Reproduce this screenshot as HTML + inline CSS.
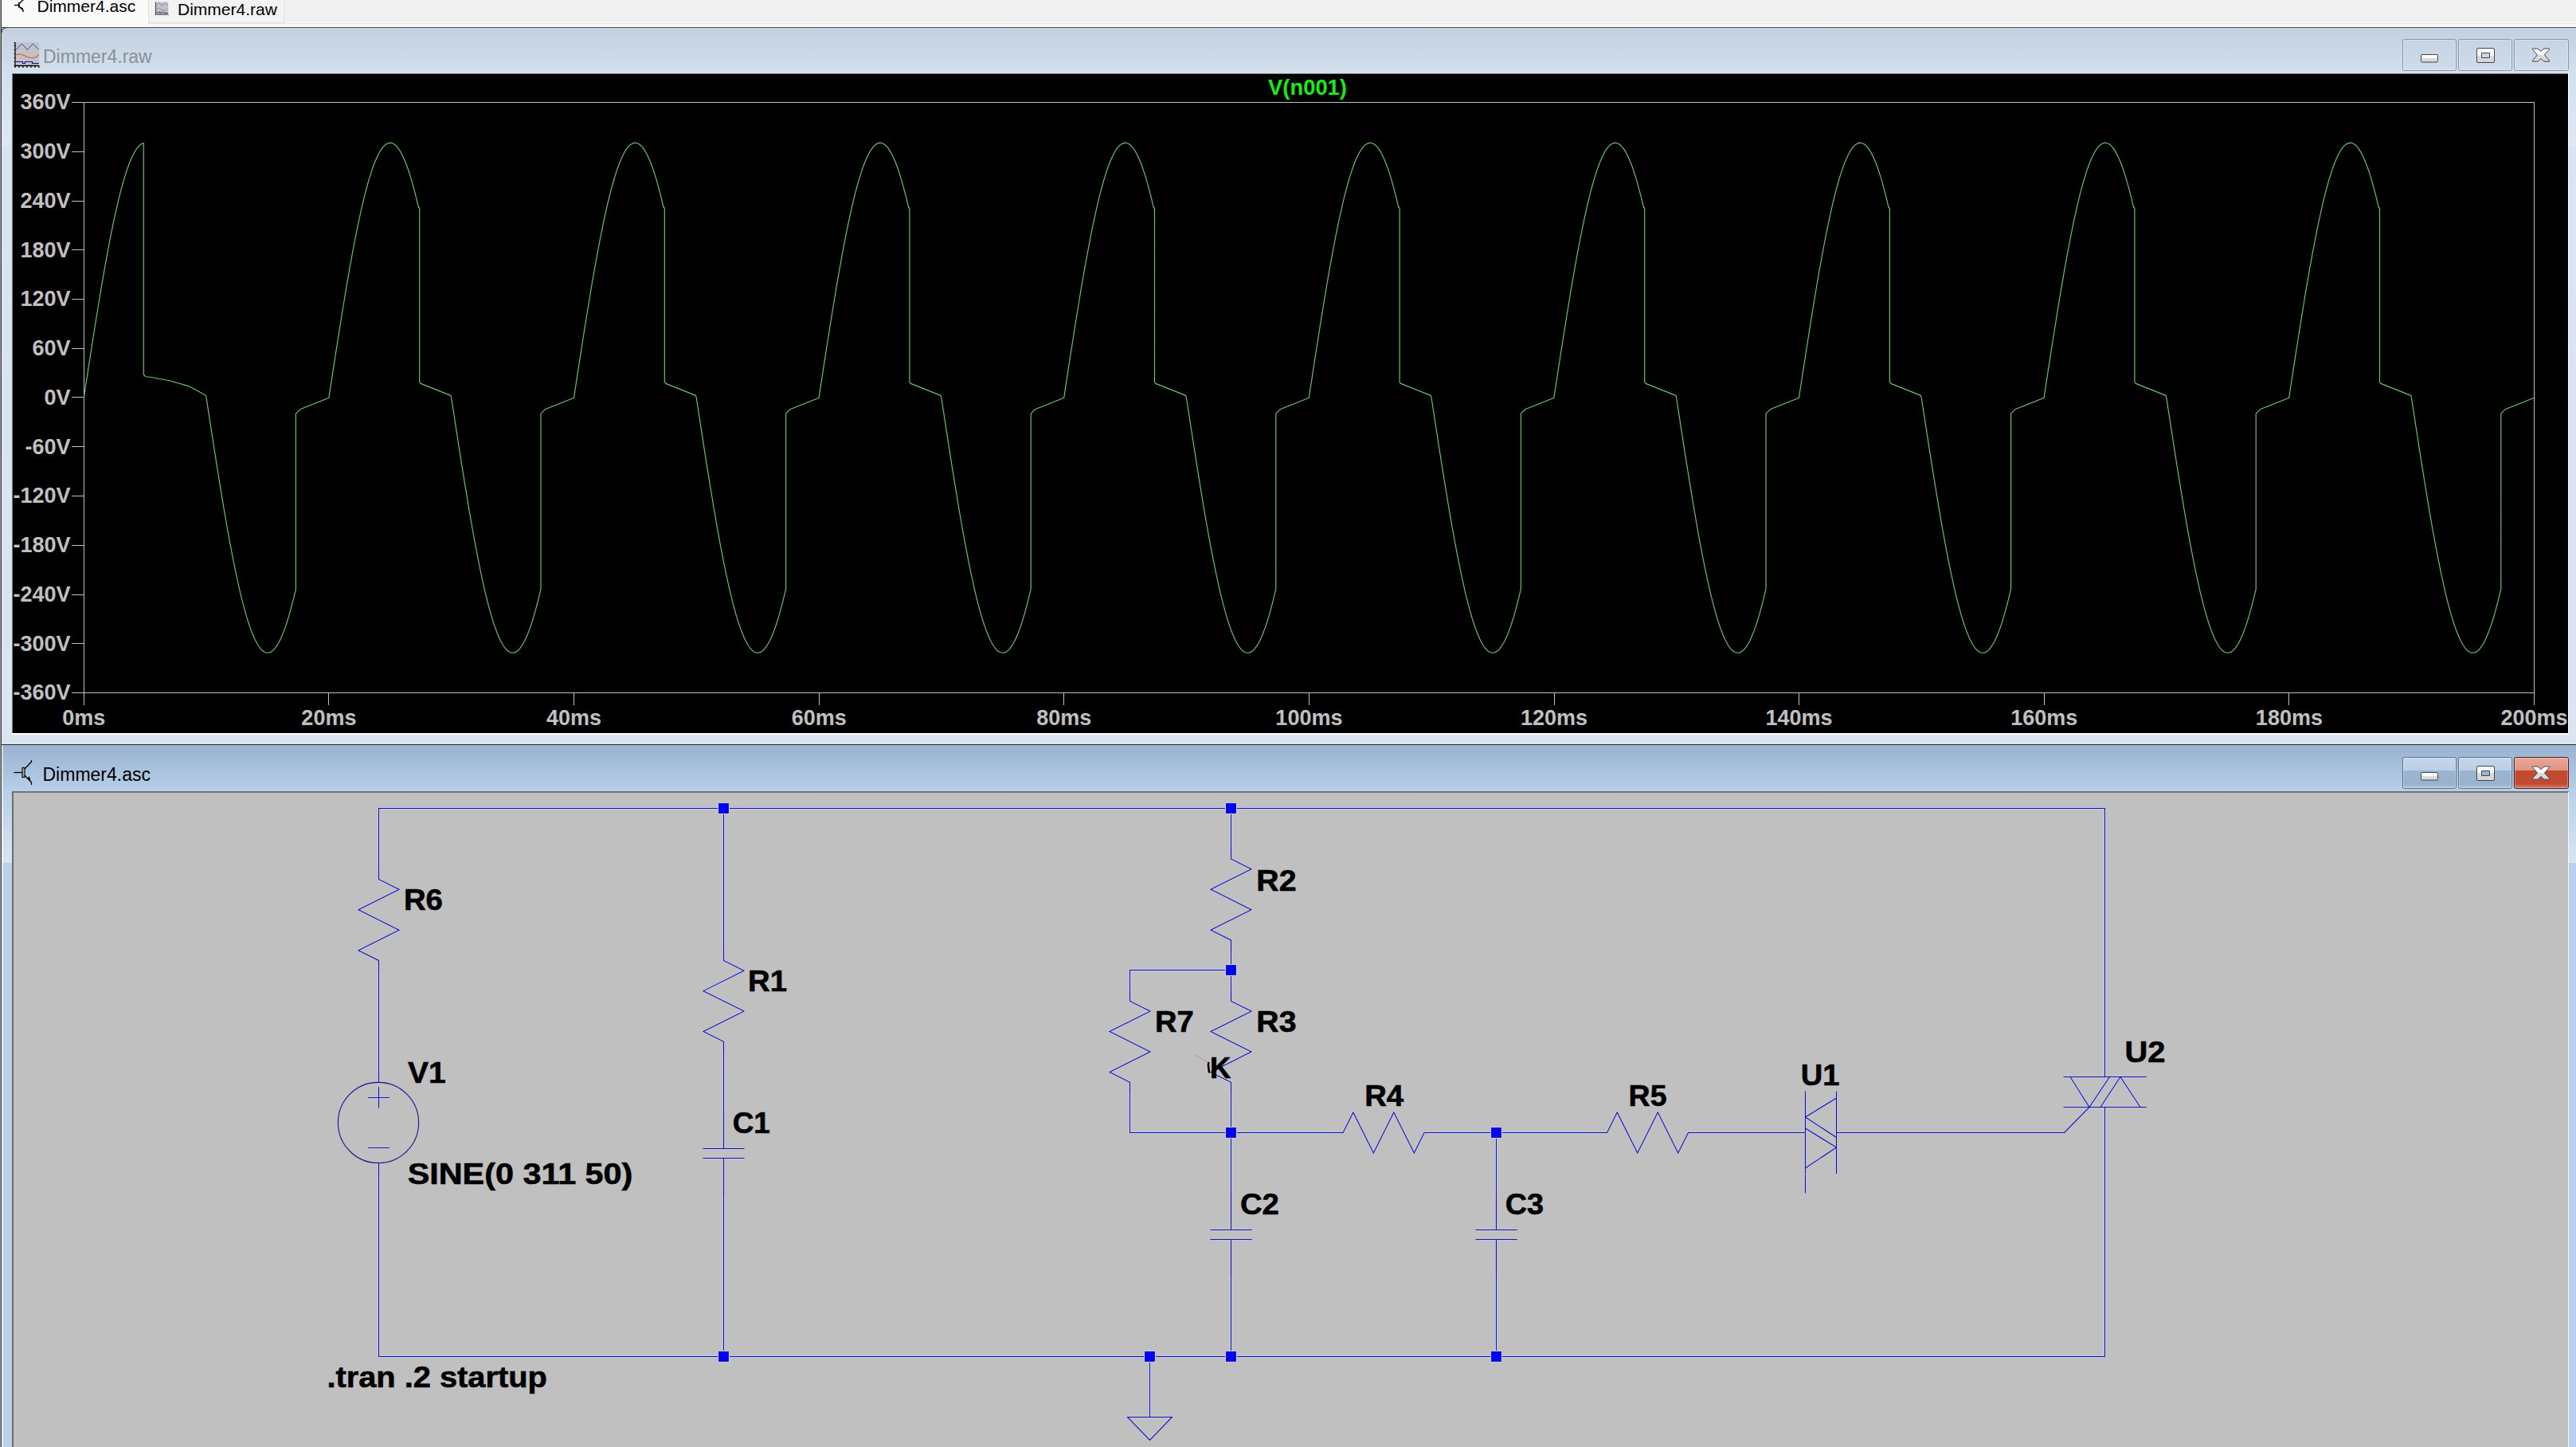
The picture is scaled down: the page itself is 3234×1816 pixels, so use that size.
<!DOCTYPE html><html><head><meta charset="utf-8"><title>Dimmer4</title><style>html,body{margin:0;padding:0;width:3234px;height:1816px;overflow:hidden;background:#f2f2f2}svg{display:block;position:absolute;left:0;top:0}text{font-family:"Liberation Sans",sans-serif}</style></head><body>
<svg width="3234" height="1816" viewBox="0 0 3234 1816">
<defs><linearGradient id="tb1" x1="0" y1="0" x2="0" y2="1"><stop offset="0" stop-color="#c2d0df"/><stop offset="0.39" stop-color="#d3e0ee"/><stop offset="1" stop-color="#dde8f3"/></linearGradient><linearGradient id="fr1" x1="0" y1="0" x2="0" y2="1"><stop offset="0" stop-color="#d8e4f0"/><stop offset="1" stop-color="#dae5f1"/></linearGradient><linearGradient id="tb2" x1="0" y1="0" x2="0" y2="1"><stop offset="0" stop-color="#98b2cf"/><stop offset="0.4" stop-color="#b8d0e9"/><stop offset="1" stop-color="#d8e6f2"/></linearGradient><linearGradient id="btnI" x1="0" y1="0" x2="0" y2="1"><stop offset="0" stop-color="#c6d4e3"/><stop offset="1" stop-color="#cfdcea"/></linearGradient><linearGradient id="btnA" x1="0" y1="0" x2="0" y2="1"><stop offset="0" stop-color="#c3d6ea"/><stop offset="0.42" stop-color="#bcd0e5"/><stop offset="0.43" stop-color="#9db5d1"/><stop offset="0.85" stop-color="#98b1cd"/><stop offset="1" stop-color="#b3c9e1"/></linearGradient><linearGradient id="btnC" x1="0" y1="0" x2="0" y2="1"><stop offset="0" stop-color="#e9a899"/><stop offset="0.42" stop-color="#df9282"/><stop offset="0.43" stop-color="#c44a2f"/><stop offset="0.85" stop-color="#c04a33"/><stop offset="1" stop-color="#d9806c"/></linearGradient><linearGradient id="glyph" x1="0" y1="0" x2="0" y2="1"><stop offset="0" stop-color="#ffffff"/><stop offset="0.5" stop-color="#fafafa"/><stop offset="0.5" stop-color="#dcdcdc"/><stop offset="1" stop-color="#d6d6d6"/></linearGradient></defs>
<rect x="0" y="0" width="3234" height="34" fill="#f0f0f0"/>
<rect x="0" y="28" width="3234" height="6" fill="#f8f8f8"/>
<rect x="186" y="29" width="3048" height="1" fill="#e6e6e6"/>
<rect x="2" y="0" width="184" height="34" fill="#fafafa"/>
<rect x="186.5" y="-1" width="170.5" height="29.5" fill="#f3f3f3" stroke="#e0e0e0" stroke-width="1"/>
<rect x="0" y="34" width="3234" height="1" fill="#4d4d4d"/>
<rect x="0" y="0" width="1" height="1816" fill="#9a9a9a"/>
<rect x="1" y="0" width="1" height="1816" fill="#3a3a3a"/>
<g fill="none" stroke="#000" stroke-width="1.4"><path d="M18 6.5 H23.5"/><path d="M24.5 4 L30 -1"/><path d="M24.5 8.5 L29 13 V15"/></g><rect x="23" y="3" width="1.8" height="6.6" fill="#000"/><path d="M25.8 9.2 L28.6 10.6 L28.4 12.6 Z" fill="#000" stroke="#000" stroke-width="1"/>
<text x="46.5" y="15" font-size="21" fill="#000">Dimmer4.asc</text>
<g transform="translate(194.50,2.50) scale(0.5200)"><rect x="3" y="0" width="29" height="29" fill="#c3c3c3"/><path d="M3 9.5 L10.4 2 L17.4 9.5 L24.4 2 L32 9.5" fill="none" stroke="#2828d8" stroke-width="0.9"/><path d="M3 16 C6 14.5 9 14.5 13 16.5 C17 18.5 22 20.5 26 19.5 C29 18.5 31 17 32 15.5" fill="none" stroke="#e84040" stroke-width="1.1"/><path d="M3 24.5 H11.5 V26.5 H14.5 V24.5 H23.5 V26.5 H32" fill="none" stroke="#1010a0" stroke-width="1.2"/><path d="M2 0 V32 M0.5 29.5 H32" fill="none" stroke="#000" stroke-width="1.3"/><path d="M0.5 0.5 H2 M0.5 4.5 H2 M0.5 9.5 H2 M0.5 14.5 H2 M0.5 19.5 H2 M0.5 24.5 H2 M7.0 29.5 V32 M12.0 29.5 V32 M17.0 29.5 V32 M22.0 29.5 V32 M27.0 29.5 V32 M32.0 29.5 V32 " fill="none" stroke="#000" stroke-width="1.2"/></g>
<text x="223" y="19" font-size="21" fill="#000">Dimmer4.raw</text>
<path d="M2 41 Q2 35 8 35 H3234 V934 H2 Z" fill="url(#fr1)"/>
<rect x="2" y="35" width="3232" height="148" fill="url(#tb1)"/>
<path d="M2 41 Q2 35 8 35" fill="none" stroke="#333" stroke-width="1.2"/>
<g transform="translate(17.00,53.00) scale(1.0000)"><rect x="3" y="0" width="29" height="29" fill="#c3c3c3"/><path d="M3 9.5 L10.4 2 L17.4 9.5 L24.4 2 L32 9.5" fill="none" stroke="#2828d8" stroke-width="0.9"/><path d="M3 16 C6 14.5 9 14.5 13 16.5 C17 18.5 22 20.5 26 19.5 C29 18.5 31 17 32 15.5" fill="none" stroke="#e84040" stroke-width="1.1"/><path d="M3 24.5 H11.5 V26.5 H14.5 V24.5 H23.5 V26.5 H32" fill="none" stroke="#1010a0" stroke-width="1.2"/><path d="M2 0 V32 M0.5 29.5 H32" fill="none" stroke="#000" stroke-width="1.3"/><path d="M0.5 0.5 H2 M0.5 4.5 H2 M0.5 9.5 H2 M0.5 14.5 H2 M0.5 19.5 H2 M0.5 24.5 H2 M7.0 29.5 V32 M12.0 29.5 V32 M17.0 29.5 V32 M22.0 29.5 V32 M27.0 29.5 V32 M32.0 29.5 V32 " fill="none" stroke="#000" stroke-width="1.2"/></g>
<text x="54" y="79" font-size="23" fill="#8a9096">Dimmer4.raw</text>
<rect x="3016.5" y="49.5" width="67" height="39" rx="2.2" ry="2.2" fill="url(#btnI)" stroke="#8797ab" stroke-width="1"/><rect x="3017.5" y="50.5" width="65" height="37" rx="2" ry="2" fill="none" stroke="#ffffff" stroke-opacity="0.35" stroke-width="1"/><rect x="3086.5" y="49.5" width="67" height="39" rx="2.2" ry="2.2" fill="url(#btnI)" stroke="#8797ab" stroke-width="1"/><rect x="3087.5" y="50.5" width="65" height="37" rx="2" ry="2" fill="none" stroke="#ffffff" stroke-opacity="0.35" stroke-width="1"/><rect x="3156.5" y="49.5" width="68" height="39" rx="2.2" ry="2.2" fill="url(#btnI)" stroke="#8797ab" stroke-width="1"/><rect x="3157.5" y="50.5" width="66" height="37" rx="2" ry="2" fill="none" stroke="#ffffff" stroke-opacity="0.35" stroke-width="1"/><rect x="3039.5" y="68.5" width="21" height="9.5" rx="1.5" fill="url(#glyph)" stroke="#3d4652" stroke-width="1"/><path d="M3111 60.5 h19 a1.5 1.5 0 0 1 1.5 1.5 v15 a1.5 1.5 0 0 1 -1.5 1.5 h-19 a1.5 1.5 0 0 1 -1.5 -1.5 v-15 a1.5 1.5 0 0 1 1.5 -1.5 Z M3115.5 66.5 v6 h10 v-6 Z" fill="url(#glyph)" fill-rule="evenodd" stroke="#3d4652" stroke-width="1"/><path d="M3179.5 61.0 L3186.0 61.0 L3190.0 64.5 L3194.0 61.0 L3200.5 61.0 L3200.5 62.2 L3194.5 69.0 L3200.5 75.8 L3200.5 77.2 L3194.0 77.2 L3190.0 73.5 L3186.0 77.2 L3179.5 77.2 L3179.5 75.8 L3185.5 69.0 L3179.5 62.2Z" fill="url(#glyph)" stroke="#3d4652" stroke-width="1" stroke-linejoin="round"/>
<rect x="15" y="92" width="3210" height="830" fill="#ffffff"/>
<rect x="15" y="92" width="3209" height="1" fill="#7a7a7a"/>
<rect x="15" y="92" width="1" height="828" fill="#7a7a7a"/>
<rect x="16" y="93" width="3208" height="827" fill="#000"/>
<g stroke="#c0c0c0" stroke-width="1" fill="none" shape-rendering="crispEdges">
<path d="M90 128.5 H3181.5 M90 869.5 H3181.5 M105.5 128.5 V884.5 M3181.5 128.5 V884.5"/>
<path d="M90 128.5 H105.5 M90 190.5 H105.5 M90 252.5 H105.5 M90 313.5 H105.5 M90 375.5 H105.5 M90 437.5 H105.5 M90 498.5 H105.5 M90 560.5 H105.5 M90 622.5 H105.5 M90 684.5 H105.5 M90 746.5 H105.5 M90 807.5 H105.5 M90 869.5 H105.5 M105.5 869.5 V884.5 M412.5 869.5 V884.5 M720.5 869.5 V884.5 M1028.5 869.5 V884.5 M1335.5 869.5 V884.5 M1643.5 869.5 V884.5 M1951.5 869.5 V884.5 M2258.5 869.5 V884.5 M2566.5 869.5 V884.5 M2873.5 869.5 V884.5 M3181.5 869.5 V884.5 "/>
</g>
<g font-size="27" font-weight="bold" fill="#c0c0c0" text-anchor="end">
<text x="88.5" y="137.3">360V</text>
<text x="88.5" y="199.1">300V</text>
<text x="88.5" y="260.8">240V</text>
<text x="88.5" y="322.6">180V</text>
<text x="88.5" y="384.3">120V</text>
<text x="88.5" y="446.1">60V</text>
<text x="88.5" y="507.8">0V</text>
<text x="88.5" y="569.5">-60V</text>
<text x="88.5" y="631.3">-120V</text>
<text x="88.5" y="693.0">-180V</text>
<text x="88.5" y="754.8">-240V</text>
<text x="88.5" y="816.5">-300V</text>
<text x="88.5" y="878.3">-360V</text>
</g>
<g font-size="27" font-weight="bold" fill="#c0c0c0" text-anchor="middle">
<text x="105.3" y="909.5">0ms</text>
<text x="412.9" y="909.5">20ms</text>
<text x="720.5" y="909.5">40ms</text>
<text x="1028.2" y="909.5">60ms</text>
<text x="1335.8" y="909.5">80ms</text>
<text x="1643.4" y="909.5">100ms</text>
<text x="1951.0" y="909.5">120ms</text>
<text x="2258.6" y="909.5">140ms</text>
<text x="2566.3" y="909.5">160ms</text>
<text x="2873.9" y="909.5">180ms</text>
<text x="3181.5" y="909.5">200ms</text>
</g>
<text x="1592.0" y="118.8" font-size="27" font-weight="bold" fill="#18ec18" textLength="99" lengthAdjust="spacingAndGlyphs">V(n001)</text>
<path d="M105.3 499.3L107.1 487.2L109.0 475.2L110.8 463.2L112.7 451.2L114.5 439.3L116.4 427.5L118.2 415.8L120.1 404.2L121.9 392.8L123.8 381.5L125.6 370.4L127.4 359.4L129.3 348.7L131.1 338.1L133.0 327.8L134.8 317.8L136.7 308.0L138.5 298.4L140.4 289.2L142.2 280.2L144.1 271.6L145.9 263.3L147.7 255.3L149.6 247.7L151.4 240.4L153.3 233.5L155.1 227.0L157.0 220.8L158.8 215.1L160.7 209.7L162.5 204.8L164.4 200.3L166.2 196.2L168.1 192.6L169.9 189.3L171.7 186.6L173.6 184.2L175.4 182.3L177.3 180.9L179.1 179.9L180.2 179.5L180.2 470.0L183.0 472.8L188.4 473.3L213.0 477.7L237.6 484.9L258.3 496.2L259.1 499.3L260.9 511.4L262.8 523.4L264.6 535.4L266.5 547.4L268.3 559.3L270.2 571.1L272.0 582.8L273.9 594.4L275.7 605.8L277.6 617.1L279.4 628.2L281.2 639.2L283.1 649.9L284.9 660.5L286.8 670.8L288.6 680.8L290.5 690.6L292.3 700.2L294.2 709.4L296.0 718.4L297.9 727.0L299.7 735.3L301.5 743.3L303.4 750.9L305.2 758.2L307.1 765.1L308.9 771.6L310.8 777.8L312.6 783.5L314.5 788.9L316.3 793.8L318.2 798.3L320.0 802.4L321.9 806.0L323.7 809.3L325.5 812.0L327.4 814.4L329.2 816.3L331.1 817.7L332.9 818.7L334.8 819.2L336.6 819.3L338.5 818.9L340.3 818.1L342.2 816.8L344.0 815.1L345.8 812.9L347.7 810.2L349.5 807.2L351.4 803.7L353.2 799.7L355.1 795.3L356.9 790.6L358.8 785.3L360.6 779.7L362.5 773.7L364.3 767.3L366.1 760.5L368.0 753.4L369.8 745.9L371.4 739.3L371.4 519.2L376.6 513.8L412.4 499.5L412.9 499.3L414.7 487.2L416.6 475.2L418.4 463.2L420.3 451.2L422.1 439.3L424.0 427.5L425.8 415.8L427.7 404.2L429.5 392.8L431.4 381.5L433.2 370.4L435.0 359.4L436.9 348.7L438.7 338.1L440.6 327.8L442.4 317.8L444.3 308.0L446.1 298.4L448.0 289.2L449.8 280.2L451.7 271.6L453.5 263.3L455.3 255.3L457.2 247.7L459.0 240.4L460.9 233.5L462.7 227.0L464.6 220.8L466.4 215.1L468.3 209.7L470.1 204.8L472.0 200.3L473.8 196.2L475.7 192.6L477.5 189.3L479.3 186.6L481.2 184.2L483.0 182.3L484.9 180.9L486.7 179.9L488.6 179.4L490.4 179.3L492.3 179.7L494.1 180.5L496.0 181.8L497.8 183.5L499.6 185.7L501.5 188.4L503.3 191.4L505.2 194.9L507.0 198.9L508.9 203.3L510.7 208.0L512.6 213.3L514.4 218.9L516.3 224.9L518.1 231.3L519.9 238.1L521.8 245.2L523.6 252.7L525.5 260.6L525.2 259.3L526.7 261.3L526.7 479.7L528.2 481.4L565.9 496.4L566.7 499.3L568.5 511.4L570.4 523.4L572.2 535.4L574.1 547.4L575.9 559.3L577.8 571.1L579.6 582.8L581.5 594.4L583.3 605.8L585.2 617.1L587.0 628.2L588.8 639.2L590.7 649.9L592.5 660.5L594.4 670.8L596.2 680.8L598.1 690.6L599.9 700.2L601.8 709.4L603.6 718.4L605.5 727.0L607.3 735.3L609.1 743.3L611.0 750.9L612.8 758.2L614.7 765.1L616.5 771.6L618.4 777.8L620.2 783.5L622.1 788.9L623.9 793.8L625.8 798.3L627.6 802.4L629.5 806.0L631.3 809.3L633.1 812.0L635.0 814.4L636.8 816.3L638.7 817.7L640.5 818.7L642.4 819.2L644.2 819.3L646.1 818.9L647.9 818.1L649.8 816.8L651.6 815.1L653.4 812.9L655.3 810.2L657.1 807.2L659.0 803.7L660.8 799.7L662.7 795.3L664.5 790.6L666.4 785.3L668.2 779.7L670.1 773.7L671.9 767.3L673.7 760.5L675.6 753.4L677.4 745.9L679.0 739.3L679.0 519.2L684.2 513.8L720.0 499.5L720.5 499.3L722.3 487.2L724.2 475.2L726.0 463.2L727.9 451.2L729.7 439.3L731.6 427.5L733.4 415.8L735.3 404.2L737.1 392.8L739.0 381.5L740.8 370.4L742.6 359.4L744.5 348.7L746.3 338.1L748.2 327.8L750.0 317.8L751.9 308.0L753.7 298.4L755.6 289.2L757.4 280.2L759.3 271.6L761.1 263.3L762.9 255.3L764.8 247.7L766.6 240.4L768.5 233.5L770.3 227.0L772.2 220.8L774.0 215.1L775.9 209.7L777.7 204.8L779.6 200.3L781.4 196.2L783.3 192.6L785.1 189.3L786.9 186.6L788.8 184.2L790.6 182.3L792.5 180.9L794.3 179.9L796.2 179.4L798.0 179.3L799.9 179.7L801.7 180.5L803.6 181.8L805.4 183.5L807.2 185.7L809.1 188.4L810.9 191.4L812.8 194.9L814.6 198.9L816.5 203.3L818.3 208.0L820.2 213.3L822.0 218.9L823.9 224.9L825.7 231.3L827.5 238.1L829.4 245.2L831.2 252.7L833.1 260.6L832.8 259.3L834.3 261.3L834.3 479.7L835.9 481.4L873.5 496.4L874.3 499.3L876.1 511.4L878.0 523.4L879.8 535.4L881.7 547.4L883.5 559.3L885.4 571.1L887.2 582.8L889.1 594.4L890.9 605.8L892.8 617.1L894.6 628.2L896.4 639.2L898.3 649.9L900.1 660.5L902.0 670.8L903.8 680.8L905.7 690.6L907.5 700.2L909.4 709.4L911.2 718.4L913.1 727.0L914.9 735.3L916.7 743.3L918.6 750.9L920.4 758.2L922.3 765.1L924.1 771.6L926.0 777.8L927.8 783.5L929.7 788.9L931.5 793.8L933.4 798.3L935.2 802.4L937.1 806.0L938.9 809.3L940.7 812.0L942.6 814.4L944.4 816.3L946.3 817.7L948.1 818.7L950.0 819.2L951.8 819.3L953.7 818.9L955.5 818.1L957.4 816.8L959.2 815.1L961.0 812.9L962.9 810.2L964.7 807.2L966.6 803.7L968.4 799.7L970.3 795.3L972.1 790.6L974.0 785.3L975.8 779.7L977.7 773.7L979.5 767.3L981.3 760.5L983.2 753.4L985.0 745.9L986.6 739.3L986.6 519.2L991.8 513.8L1027.6 499.5L1028.1 499.3L1029.9 487.2L1031.8 475.2L1033.6 463.2L1035.5 451.2L1037.3 439.3L1039.2 427.5L1041.0 415.8L1042.9 404.2L1044.7 392.8L1046.6 381.5L1048.4 370.4L1050.2 359.4L1052.1 348.7L1053.9 338.1L1055.8 327.8L1057.6 317.8L1059.5 308.0L1061.3 298.4L1063.2 289.2L1065.0 280.2L1066.9 271.6L1068.7 263.3L1070.5 255.3L1072.4 247.7L1074.2 240.4L1076.1 233.5L1077.9 227.0L1079.8 220.8L1081.6 215.1L1083.5 209.7L1085.3 204.8L1087.2 200.3L1089.0 196.2L1090.9 192.6L1092.7 189.3L1094.5 186.6L1096.4 184.2L1098.2 182.3L1100.1 180.9L1101.9 179.9L1103.8 179.4L1105.6 179.3L1107.5 179.7L1109.3 180.5L1111.2 181.8L1113.0 183.5L1114.8 185.7L1116.7 188.4L1118.5 191.4L1120.4 194.9L1122.2 198.9L1124.1 203.3L1125.9 208.0L1127.8 213.3L1129.6 218.9L1131.5 224.9L1133.3 231.3L1135.1 238.1L1137.0 245.2L1138.8 252.7L1140.7 260.6L1140.4 259.3L1141.9 261.3L1141.9 479.7L1143.5 481.4L1181.1 496.4L1181.9 499.3L1183.7 511.4L1185.6 523.4L1187.4 535.4L1189.3 547.4L1191.1 559.3L1193.0 571.1L1194.8 582.8L1196.7 594.4L1198.5 605.8L1200.4 617.1L1202.2 628.2L1204.0 639.2L1205.9 649.9L1207.7 660.5L1209.6 670.8L1211.4 680.8L1213.3 690.6L1215.1 700.2L1217.0 709.4L1218.8 718.4L1220.7 727.0L1222.5 735.3L1224.3 743.3L1226.2 750.9L1228.0 758.2L1229.9 765.1L1231.7 771.6L1233.6 777.8L1235.4 783.5L1237.3 788.9L1239.1 793.8L1241.0 798.3L1242.8 802.4L1244.7 806.0L1246.5 809.3L1248.3 812.0L1250.2 814.4L1252.0 816.3L1253.9 817.7L1255.7 818.7L1257.6 819.2L1259.4 819.3L1261.3 818.9L1263.1 818.1L1265.0 816.8L1266.8 815.1L1268.6 812.9L1270.5 810.2L1272.3 807.2L1274.2 803.7L1276.0 799.7L1277.9 795.3L1279.7 790.6L1281.6 785.3L1283.4 779.7L1285.3 773.7L1287.1 767.3L1288.9 760.5L1290.8 753.4L1292.6 745.9L1294.2 739.3L1294.2 519.2L1299.4 513.8L1335.2 499.5L1335.7 499.3L1337.5 487.2L1339.4 475.2L1341.2 463.2L1343.1 451.2L1344.9 439.3L1346.8 427.5L1348.6 415.8L1350.5 404.2L1352.3 392.8L1354.2 381.5L1356.0 370.4L1357.8 359.4L1359.7 348.7L1361.5 338.1L1363.4 327.8L1365.2 317.8L1367.1 308.0L1368.9 298.4L1370.8 289.2L1372.6 280.2L1374.5 271.6L1376.3 263.3L1378.1 255.3L1380.0 247.7L1381.8 240.4L1383.7 233.5L1385.5 227.0L1387.4 220.8L1389.2 215.1L1391.1 209.7L1392.9 204.8L1394.8 200.3L1396.6 196.2L1398.5 192.6L1400.3 189.3L1402.1 186.6L1404.0 184.2L1405.8 182.3L1407.7 180.9L1409.5 179.9L1411.4 179.4L1413.2 179.3L1415.1 179.7L1416.9 180.5L1418.8 181.8L1420.6 183.5L1422.4 185.7L1424.3 188.4L1426.1 191.4L1428.0 194.9L1429.8 198.9L1431.7 203.3L1433.5 208.0L1435.4 213.3L1437.2 218.9L1439.1 224.9L1440.9 231.3L1442.7 238.1L1444.6 245.2L1446.4 252.7L1448.3 260.6L1448.0 259.3L1449.5 261.3L1449.5 479.7L1451.0 481.4L1488.7 496.4L1489.5 499.3L1491.3 511.4L1493.2 523.4L1495.0 535.4L1496.9 547.4L1498.7 559.3L1500.6 571.1L1502.4 582.8L1504.3 594.4L1506.1 605.8L1508.0 617.1L1509.8 628.2L1511.6 639.2L1513.5 649.9L1515.3 660.5L1517.2 670.8L1519.0 680.8L1520.9 690.6L1522.7 700.2L1524.6 709.4L1526.4 718.4L1528.3 727.0L1530.1 735.3L1531.9 743.3L1533.8 750.9L1535.6 758.2L1537.5 765.1L1539.3 771.6L1541.2 777.8L1543.0 783.5L1544.9 788.9L1546.7 793.8L1548.6 798.3L1550.4 802.4L1552.3 806.0L1554.1 809.3L1555.9 812.0L1557.8 814.4L1559.6 816.3L1561.5 817.7L1563.3 818.7L1565.2 819.2L1567.0 819.3L1568.9 818.9L1570.7 818.1L1572.6 816.8L1574.4 815.1L1576.2 812.9L1578.1 810.2L1579.9 807.2L1581.8 803.7L1583.6 799.7L1585.5 795.3L1587.3 790.6L1589.2 785.3L1591.0 779.7L1592.9 773.7L1594.7 767.3L1596.5 760.5L1598.4 753.4L1600.2 745.9L1601.8 739.3L1601.8 519.2L1607.0 513.8L1642.8 499.5L1643.3 499.3L1645.1 487.2L1647.0 475.2L1648.8 463.2L1650.7 451.2L1652.5 439.3L1654.4 427.5L1656.2 415.8L1658.1 404.2L1659.9 392.8L1661.8 381.5L1663.6 370.4L1665.4 359.4L1667.3 348.7L1669.1 338.1L1671.0 327.8L1672.8 317.8L1674.7 308.0L1676.5 298.4L1678.4 289.2L1680.2 280.2L1682.1 271.6L1683.9 263.3L1685.7 255.3L1687.6 247.7L1689.4 240.4L1691.3 233.5L1693.1 227.0L1695.0 220.8L1696.8 215.1L1698.7 209.7L1700.5 204.8L1702.4 200.3L1704.2 196.2L1706.1 192.6L1707.9 189.3L1709.7 186.6L1711.6 184.2L1713.4 182.3L1715.3 180.9L1717.1 179.9L1719.0 179.4L1720.8 179.3L1722.7 179.7L1724.5 180.5L1726.4 181.8L1728.2 183.5L1730.0 185.7L1731.9 188.4L1733.7 191.4L1735.6 194.9L1737.4 198.9L1739.3 203.3L1741.1 208.0L1743.0 213.3L1744.8 218.9L1746.7 224.9L1748.5 231.3L1750.3 238.1L1752.2 245.2L1754.0 252.7L1755.9 260.6L1755.6 259.3L1757.1 261.3L1757.1 479.7L1758.7 481.4L1796.3 496.4L1797.1 499.3L1798.9 511.4L1800.8 523.4L1802.6 535.4L1804.5 547.4L1806.3 559.3L1808.2 571.1L1810.0 582.8L1811.9 594.4L1813.7 605.8L1815.6 617.1L1817.4 628.2L1819.2 639.2L1821.1 649.9L1822.9 660.5L1824.8 670.8L1826.6 680.8L1828.5 690.6L1830.3 700.2L1832.2 709.4L1834.0 718.4L1835.9 727.0L1837.7 735.3L1839.5 743.3L1841.4 750.9L1843.2 758.2L1845.1 765.1L1846.9 771.6L1848.8 777.8L1850.6 783.5L1852.5 788.9L1854.3 793.8L1856.2 798.3L1858.0 802.4L1859.9 806.0L1861.7 809.3L1863.5 812.0L1865.4 814.4L1867.2 816.3L1869.1 817.7L1870.9 818.7L1872.8 819.2L1874.6 819.3L1876.5 818.9L1878.3 818.1L1880.2 816.8L1882.0 815.1L1883.8 812.9L1885.7 810.2L1887.5 807.2L1889.4 803.7L1891.2 799.7L1893.1 795.3L1894.9 790.6L1896.8 785.3L1898.6 779.7L1900.5 773.7L1902.3 767.3L1904.1 760.5L1906.0 753.4L1907.8 745.9L1909.4 739.3L1909.4 519.2L1914.6 513.8L1950.4 499.5L1950.9 499.3L1952.7 487.2L1954.6 475.2L1956.4 463.2L1958.3 451.2L1960.1 439.3L1962.0 427.5L1963.8 415.8L1965.7 404.2L1967.5 392.8L1969.4 381.5L1971.2 370.4L1973.0 359.4L1974.9 348.7L1976.7 338.1L1978.6 327.8L1980.4 317.8L1982.3 308.0L1984.1 298.4L1986.0 289.2L1987.8 280.2L1989.7 271.6L1991.5 263.3L1993.3 255.3L1995.2 247.7L1997.0 240.4L1998.9 233.5L2000.7 227.0L2002.6 220.8L2004.4 215.1L2006.3 209.7L2008.1 204.8L2010.0 200.3L2011.8 196.2L2013.7 192.6L2015.5 189.3L2017.3 186.6L2019.2 184.2L2021.0 182.3L2022.9 180.9L2024.7 179.9L2026.6 179.4L2028.4 179.3L2030.3 179.7L2032.1 180.5L2034.0 181.8L2035.8 183.5L2037.6 185.7L2039.5 188.4L2041.3 191.4L2043.2 194.9L2045.0 198.9L2046.9 203.3L2048.7 208.0L2050.6 213.3L2052.4 218.9L2054.3 224.9L2056.1 231.3L2057.9 238.1L2059.8 245.2L2061.6 252.7L2063.5 260.6L2063.2 259.3L2064.7 261.3L2064.7 479.7L2066.2 481.4L2103.9 496.4L2104.7 499.3L2106.5 511.4L2108.4 523.4L2110.2 535.4L2112.1 547.4L2113.9 559.3L2115.8 571.1L2117.6 582.8L2119.5 594.4L2121.3 605.8L2123.2 617.1L2125.0 628.2L2126.8 639.2L2128.7 649.9L2130.5 660.5L2132.4 670.8L2134.2 680.8L2136.1 690.6L2137.9 700.2L2139.8 709.4L2141.6 718.4L2143.5 727.0L2145.3 735.3L2147.1 743.3L2149.0 750.9L2150.8 758.2L2152.7 765.1L2154.5 771.6L2156.4 777.8L2158.2 783.5L2160.1 788.9L2161.9 793.8L2163.8 798.3L2165.6 802.4L2167.5 806.0L2169.3 809.3L2171.1 812.0L2173.0 814.4L2174.8 816.3L2176.7 817.7L2178.5 818.7L2180.4 819.2L2182.2 819.3L2184.1 818.9L2185.9 818.1L2187.8 816.8L2189.6 815.1L2191.4 812.9L2193.3 810.2L2195.1 807.2L2197.0 803.7L2198.8 799.7L2200.7 795.3L2202.5 790.6L2204.4 785.3L2206.2 779.7L2208.1 773.7L2209.9 767.3L2211.7 760.5L2213.6 753.4L2215.4 745.9L2217.0 739.3L2217.0 519.2L2222.2 513.8L2258.0 499.5L2258.5 499.3L2260.3 487.2L2262.2 475.2L2264.0 463.2L2265.9 451.2L2267.7 439.3L2269.6 427.5L2271.4 415.8L2273.3 404.2L2275.1 392.8L2277.0 381.5L2278.8 370.4L2280.6 359.4L2282.5 348.7L2284.3 338.1L2286.2 327.8L2288.0 317.8L2289.9 308.0L2291.7 298.4L2293.6 289.2L2295.4 280.2L2297.3 271.6L2299.1 263.3L2300.9 255.3L2302.8 247.7L2304.6 240.4L2306.5 233.5L2308.3 227.0L2310.2 220.8L2312.0 215.1L2313.9 209.7L2315.7 204.8L2317.6 200.3L2319.4 196.2L2321.3 192.6L2323.1 189.3L2324.9 186.6L2326.8 184.2L2328.6 182.3L2330.5 180.9L2332.3 179.9L2334.2 179.4L2336.0 179.3L2337.9 179.7L2339.7 180.5L2341.6 181.8L2343.4 183.5L2345.2 185.7L2347.1 188.4L2348.9 191.4L2350.8 194.9L2352.6 198.9L2354.5 203.3L2356.3 208.0L2358.2 213.3L2360.0 218.9L2361.9 224.9L2363.7 231.3L2365.5 238.1L2367.4 245.2L2369.2 252.7L2371.1 260.6L2370.8 259.3L2372.3 261.3L2372.3 479.7L2373.9 481.4L2411.5 496.4L2412.3 499.3L2414.1 511.4L2416.0 523.4L2417.8 535.4L2419.7 547.4L2421.5 559.3L2423.4 571.1L2425.2 582.8L2427.1 594.4L2428.9 605.8L2430.8 617.1L2432.6 628.2L2434.4 639.2L2436.3 649.9L2438.1 660.5L2440.0 670.8L2441.8 680.8L2443.7 690.6L2445.5 700.2L2447.4 709.4L2449.2 718.4L2451.1 727.0L2452.9 735.3L2454.7 743.3L2456.6 750.9L2458.4 758.2L2460.3 765.1L2462.1 771.6L2464.0 777.8L2465.8 783.5L2467.7 788.9L2469.5 793.8L2471.4 798.3L2473.2 802.4L2475.1 806.0L2476.9 809.3L2478.7 812.0L2480.6 814.4L2482.4 816.3L2484.3 817.7L2486.1 818.7L2488.0 819.2L2489.8 819.3L2491.7 818.9L2493.5 818.1L2495.4 816.8L2497.2 815.1L2499.0 812.9L2500.9 810.2L2502.7 807.2L2504.6 803.7L2506.4 799.7L2508.3 795.3L2510.1 790.6L2512.0 785.3L2513.8 779.7L2515.7 773.7L2517.5 767.3L2519.3 760.5L2521.2 753.4L2523.0 745.9L2524.6 739.3L2524.6 519.2L2529.8 513.8L2565.6 499.5L2566.1 499.3L2567.9 487.2L2569.8 475.2L2571.6 463.2L2573.5 451.2L2575.3 439.3L2577.2 427.5L2579.0 415.8L2580.9 404.2L2582.7 392.8L2584.6 381.5L2586.4 370.4L2588.2 359.4L2590.1 348.7L2591.9 338.1L2593.8 327.8L2595.6 317.8L2597.5 308.0L2599.3 298.4L2601.2 289.2L2603.0 280.2L2604.9 271.6L2606.7 263.3L2608.5 255.3L2610.4 247.7L2612.2 240.4L2614.1 233.5L2615.9 227.0L2617.8 220.8L2619.6 215.1L2621.5 209.7L2623.3 204.8L2625.2 200.3L2627.0 196.2L2628.9 192.6L2630.7 189.3L2632.5 186.6L2634.4 184.2L2636.2 182.3L2638.1 180.9L2639.9 179.9L2641.8 179.4L2643.6 179.3L2645.5 179.7L2647.3 180.5L2649.2 181.8L2651.0 183.5L2652.8 185.7L2654.7 188.4L2656.5 191.4L2658.4 194.9L2660.2 198.9L2662.1 203.3L2663.9 208.0L2665.8 213.3L2667.6 218.9L2669.5 224.9L2671.3 231.3L2673.1 238.1L2675.0 245.2L2676.8 252.7L2678.7 260.6L2678.4 259.3L2679.9 261.3L2679.9 479.7L2681.5 481.4L2719.1 496.4L2719.9 499.3L2721.7 511.4L2723.6 523.4L2725.4 535.4L2727.3 547.4L2729.1 559.3L2731.0 571.1L2732.8 582.8L2734.7 594.4L2736.5 605.8L2738.4 617.1L2740.2 628.2L2742.0 639.2L2743.9 649.9L2745.7 660.5L2747.6 670.8L2749.4 680.8L2751.3 690.6L2753.1 700.2L2755.0 709.4L2756.8 718.4L2758.7 727.0L2760.5 735.3L2762.3 743.3L2764.2 750.9L2766.0 758.2L2767.9 765.1L2769.7 771.6L2771.6 777.8L2773.4 783.5L2775.3 788.9L2777.1 793.8L2779.0 798.3L2780.8 802.4L2782.7 806.0L2784.5 809.3L2786.3 812.0L2788.2 814.4L2790.0 816.3L2791.9 817.7L2793.7 818.7L2795.6 819.2L2797.4 819.3L2799.3 818.9L2801.1 818.1L2803.0 816.8L2804.8 815.1L2806.6 812.9L2808.5 810.2L2810.3 807.2L2812.2 803.7L2814.0 799.7L2815.9 795.3L2817.7 790.6L2819.6 785.3L2821.4 779.7L2823.3 773.7L2825.1 767.3L2826.9 760.5L2828.8 753.4L2830.6 745.9L2832.2 739.3L2832.2 519.2L2837.4 513.8L2873.2 499.5L2873.7 499.3L2875.5 487.2L2877.4 475.2L2879.2 463.2L2881.1 451.2L2882.9 439.3L2884.8 427.5L2886.6 415.8L2888.5 404.2L2890.3 392.8L2892.2 381.5L2894.0 370.4L2895.8 359.4L2897.7 348.7L2899.5 338.1L2901.4 327.8L2903.2 317.8L2905.1 308.0L2906.9 298.4L2908.8 289.2L2910.6 280.2L2912.5 271.6L2914.3 263.3L2916.1 255.3L2918.0 247.7L2919.8 240.4L2921.7 233.5L2923.5 227.0L2925.4 220.8L2927.2 215.1L2929.1 209.7L2930.9 204.8L2932.8 200.3L2934.6 196.2L2936.5 192.6L2938.3 189.3L2940.1 186.6L2942.0 184.2L2943.8 182.3L2945.7 180.9L2947.5 179.9L2949.4 179.4L2951.2 179.3L2953.1 179.7L2954.9 180.5L2956.8 181.8L2958.6 183.5L2960.4 185.7L2962.3 188.4L2964.1 191.4L2966.0 194.9L2967.8 198.9L2969.7 203.3L2971.5 208.0L2973.4 213.3L2975.2 218.9L2977.1 224.9L2978.9 231.3L2980.7 238.1L2982.6 245.2L2984.4 252.7L2986.3 260.6L2986.0 259.3L2987.5 261.3L2987.5 479.7L2989.1 481.4L3026.7 496.4L3027.5 499.3L3029.3 511.4L3031.2 523.4L3033.0 535.4L3034.9 547.4L3036.7 559.3L3038.6 571.1L3040.4 582.8L3042.3 594.4L3044.1 605.8L3046.0 617.1L3047.8 628.2L3049.6 639.2L3051.5 649.9L3053.3 660.5L3055.2 670.8L3057.0 680.8L3058.9 690.6L3060.7 700.2L3062.6 709.4L3064.4 718.4L3066.3 727.0L3068.1 735.3L3069.9 743.3L3071.8 750.9L3073.6 758.2L3075.5 765.1L3077.3 771.6L3079.2 777.8L3081.0 783.5L3082.9 788.9L3084.7 793.8L3086.6 798.3L3088.4 802.4L3090.3 806.0L3092.1 809.3L3093.9 812.0L3095.8 814.4L3097.6 816.3L3099.5 817.7L3101.3 818.7L3103.2 819.2L3105.0 819.3L3106.9 818.9L3108.7 818.1L3110.6 816.8L3112.4 815.1L3114.2 812.9L3116.1 810.2L3117.9 807.2L3119.8 803.7L3121.6 799.7L3123.5 795.3L3125.3 790.6L3127.2 785.3L3129.0 779.7L3130.9 773.7L3132.7 767.3L3134.5 760.5L3136.4 753.4L3138.2 745.9L3139.8 739.3L3139.8 519.2L3145.0 513.8L3180.8 499.5L3181.3 499.1" fill="none" stroke="#6cc46c" stroke-width="1.15" stroke-linejoin="round"/>
<rect x="2" y="934" width="3232" height="1" fill="#2c2c2c"/>
<path d="M2 941 Q2 935 8 935 H3234 V1816 H2 Z" fill="#b9d1ea"/>
<rect x="2" y="935" width="3232" height="148" fill="url(#tb2)"/>
<rect x="2" y="935" width="1.5" height="881" fill="#ffffff" fill-opacity="0.8"/>
<g transform="translate(17.00,954.00) scale(1.000)" fill="none" stroke="#000" stroke-width="1.3"><path d="M0.5 15.5 H11"/><rect x="11" y="9.5" width="3" height="12" fill="#b0b0b0" stroke-width="1.1"/><path d="M14 11 L22.5 2 V0"/><path d="M14 19 L22.5 28 V31"/><path d="M18 23 L21 26 L19.5 21.5 Z" fill="#000"/></g>
<text x="53.5" y="979.5" font-size="23" fill="#000">Dimmer4.asc</text>
<rect x="3016.5" y="950.5" width="67" height="39" rx="2.2" ry="2.2" fill="url(#btnA)" stroke="#5f738e" stroke-width="1"/><rect x="3017.5" y="951.5" width="65" height="37" rx="2" ry="2" fill="none" stroke="#ffffff" stroke-opacity="0.35" stroke-width="1"/><rect x="3086.5" y="950.5" width="67" height="39" rx="2.2" ry="2.2" fill="url(#btnA)" stroke="#5f738e" stroke-width="1"/><rect x="3087.5" y="951.5" width="65" height="37" rx="2" ry="2" fill="none" stroke="#ffffff" stroke-opacity="0.35" stroke-width="1"/><rect x="3156.5" y="950.5" width="68" height="39" rx="2.2" ry="2.2" fill="url(#btnC)" stroke="#4a1a1a" stroke-width="1"/><rect x="3157.5" y="951.5" width="66" height="37" rx="2" ry="2" fill="none" stroke="#ffffff" stroke-opacity="0.35" stroke-width="1"/><rect x="3039.5" y="969.5" width="21" height="9.5" rx="1.5" fill="url(#glyph)" stroke="#3d4652" stroke-width="1"/><path d="M3111 961.5 h19 a1.5 1.5 0 0 1 1.5 1.5 v15 a1.5 1.5 0 0 1 -1.5 1.5 h-19 a1.5 1.5 0 0 1 -1.5 -1.5 v-15 a1.5 1.5 0 0 1 1.5 -1.5 Z M3115.5 967.5 v6 h10 v-6 Z" fill="url(#glyph)" fill-rule="evenodd" stroke="#3d4652" stroke-width="1"/><path d="M3179.5 962.0 L3186.0 962.0 L3190.0 965.5 L3194.0 962.0 L3200.5 962.0 L3200.5 963.2 L3194.5 970.0 L3200.5 976.8 L3200.5 978.2 L3194.0 978.2 L3190.0 974.5 L3186.0 978.2 L3179.5 978.2 L3179.5 976.8 L3185.5 970.0 L3179.5 963.2Z" fill="url(#glyph)" stroke="#3d4652" stroke-width="1" stroke-linejoin="round"/>
<rect x="15" y="993" width="3210" height="823" fill="#6b6f74"/>
<rect x="16" y="994" width="3209" height="822" fill="#fafafa"/>
<rect x="16" y="994" width="3208" height="822" fill="#c0c0c0"/>
<rect x="16" y="994" width="3208" height="1" fill="#7c7c7c"/>
<rect x="16" y="994" width="1" height="822" fill="#6b6b6b"/>
<g fill="none" stroke="#c4c4ff" stroke-width="3" opacity="0.95">
<path d="M475.5 1014.5 L2642.5 1014.5 M475.5 1702.5 L2642.5 1702.5 M475.5 1014.5 L475.5 1090.5 M475.5 1217.5 L475.5 1345.5 M475.5 1472.5 L475.5 1702.5 M908.5 1014.5 L908.5 1192.5 M908.5 1320.5 L908.5 1396.5 M908.5 1498.5 L908.5 1702.5 M1545.5 1014.5 L1545.5 1065.5 M1545.5 1192.5 L1545.5 1243.5 M1545.5 1371.5 L1545.5 1498.5 M1545.5 1600.5 L1545.5 1702.5 M1418.5 1217.5 L1545.5 1217.5 M1418.5 1217.5 L1418.5 1243.5 M1418.5 1371.5 L1418.5 1421.5 M1418.5 1421.5 L1673.5 1421.5 M1800.5 1421.5 L2004.5 1421.5 M1878.5 1421.5 L1878.5 1498.5 M1878.5 1600.5 L1878.5 1702.5 M1443.5 1702.5 L1443.5 1778.5 M2642.5 1014.5 L2642.5 1351.5 M2642.5 1389.5 L2642.5 1702.5" shape-rendering="crispEdges"/>
<path d="M475.50 1090.74 L475.50 1103.49 L500.99 1116.23 L450.01 1141.71 L500.99 1167.19 L450.01 1192.67 L475.50 1205.41 L475.50 1218.15 M908.50 1192.67 L908.50 1205.41 L933.99 1218.15 L883.01 1243.63 L933.99 1269.12 L883.01 1294.60 L908.50 1307.34 L908.50 1320.08 M1545.50 1065.26 L1545.50 1078.00 L1570.99 1090.74 L1520.01 1116.23 L1570.99 1141.71 L1520.01 1167.19 L1545.50 1179.93 L1545.50 1192.67 M1545.50 1243.63 L1545.50 1256.38 L1570.99 1269.12 L1520.01 1294.60 L1570.99 1320.08 L1520.01 1345.56 L1545.50 1358.30 L1545.50 1371.04 M1418.50 1243.63 L1418.50 1256.38 L1443.99 1269.12 L1393.01 1294.60 L1443.99 1320.08 L1393.01 1345.56 L1418.50 1358.30 L1418.50 1371.04 M1800.84 1421.50 L1788.10 1421.50 L1775.35 1446.98 L1749.86 1396.02 L1724.37 1446.98 L1698.88 1396.02 L1686.13 1421.50 L1673.39 1421.50 M2132.23 1421.50 L2119.48 1421.50 L2106.74 1446.98 L2081.25 1396.02 L2055.75 1446.98 L2030.26 1396.02 L2017.52 1421.50 L2004.77 1421.50 M908.5 1396.5 L908.5 1441.5 M908.5 1453.5 L908.5 1498.5 M883.0 1441.5 L934.0 1441.5 M883.0 1453.5 L934.0 1453.5 M1545.5 1498.5 L1545.5 1543.5 M1545.5 1555.5 L1545.5 1600.5 M1520.0 1543.5 L1571.0 1543.5 M1520.0 1555.5 L1571.0 1555.5 M1878.5 1498.5 L1878.5 1543.5 M1878.5 1555.5 L1878.5 1600.5 M1853.0 1543.5 L1904.0 1543.5 M1853.0 1555.5 L1904.0 1555.5 M475.5 1345.5 L475.5 1358.5 M475.5 1460.5 L475.5 1472.5 M462.8 1377.5 L488.2 1377.5 M475.5 1364.7 L475.5 1390.2 M462.8 1440.5 L488.2 1440.5 M2266.5 1370 L2266.5 1472.5 M2305.5 1370 L2305.5 1472.5 M2305.5 1378 L2266.5 1402 L2305.5 1427.5 M2266.5 1416 L2305.5 1440 L2266.5 1466 M2132.5 1421.5 L2266.5 1421.5 M2305.5 1421.5 L2591.5 1421.5 M2266.5 1474 L2266.5 1497 M2591 1351.5 L2694 1351.5 M2591 1389.5 L2694 1389.5 M2599 1351.5 L2623 1389.5 L2648.5 1351.5 M2637 1389.5 L2662 1351.5 L2687 1389.5 M2623 1389.5 L2591.5 1421.5 M1415.5 1778.5 L1471.5 1778.5 L1443.5 1807.5 Z" stroke-width="2.6"/>
</g>
<g fill="none" stroke="#16168c" stroke-width="1.1" stroke-linejoin="miter" stroke-linecap="square">
<path d="M475.5 1014.5 L2642.5 1014.5 M475.5 1702.5 L2642.5 1702.5 M475.5 1014.5 L475.5 1090.5 M475.5 1217.5 L475.5 1345.5 M475.5 1472.5 L475.5 1702.5 M908.5 1014.5 L908.5 1192.5 M908.5 1320.5 L908.5 1396.5 M908.5 1498.5 L908.5 1702.5 M1545.5 1014.5 L1545.5 1065.5 M1545.5 1192.5 L1545.5 1243.5 M1545.5 1371.5 L1545.5 1498.5 M1545.5 1600.5 L1545.5 1702.5 M1418.5 1217.5 L1545.5 1217.5 M1418.5 1217.5 L1418.5 1243.5 M1418.5 1371.5 L1418.5 1421.5 M1418.5 1421.5 L1673.5 1421.5 M1800.5 1421.5 L2004.5 1421.5 M1878.5 1421.5 L1878.5 1498.5 M1878.5 1600.5 L1878.5 1702.5 M1443.5 1702.5 L1443.5 1778.5 M2642.5 1014.5 L2642.5 1351.5 M2642.5 1389.5 L2642.5 1702.5" shape-rendering="crispEdges"/>
<path d="M475.50 1090.74 L475.50 1103.49 L500.99 1116.23 L450.01 1141.71 L500.99 1167.19 L450.01 1192.67 L475.50 1205.41 L475.50 1218.15 M908.50 1192.67 L908.50 1205.41 L933.99 1218.15 L883.01 1243.63 L933.99 1269.12 L883.01 1294.60 L908.50 1307.34 L908.50 1320.08 M1545.50 1065.26 L1545.50 1078.00 L1570.99 1090.74 L1520.01 1116.23 L1570.99 1141.71 L1520.01 1167.19 L1545.50 1179.93 L1545.50 1192.67 M1545.50 1243.63 L1545.50 1256.38 L1570.99 1269.12 L1520.01 1294.60 L1570.99 1320.08 L1520.01 1345.56 L1545.50 1358.30 L1545.50 1371.04 M1418.50 1243.63 L1418.50 1256.38 L1443.99 1269.12 L1393.01 1294.60 L1443.99 1320.08 L1393.01 1345.56 L1418.50 1358.30 L1418.50 1371.04 M1800.84 1421.50 L1788.10 1421.50 L1775.35 1446.98 L1749.86 1396.02 L1724.37 1446.98 L1698.88 1396.02 L1686.13 1421.50 L1673.39 1421.50 M2132.23 1421.50 L2119.48 1421.50 L2106.74 1446.98 L2081.25 1396.02 L2055.75 1446.98 L2030.26 1396.02 L2017.52 1421.50 L2004.77 1421.50 M908.5 1396.5 L908.5 1441.5 M908.5 1453.5 L908.5 1498.5 M883.0 1441.5 L934.0 1441.5 M883.0 1453.5 L934.0 1453.5 M1545.5 1498.5 L1545.5 1543.5 M1545.5 1555.5 L1545.5 1600.5 M1520.0 1543.5 L1571.0 1543.5 M1520.0 1555.5 L1571.0 1555.5 M1878.5 1498.5 L1878.5 1543.5 M1878.5 1555.5 L1878.5 1600.5 M1853.0 1543.5 L1904.0 1543.5 M1853.0 1555.5 L1904.0 1555.5 M475.5 1345.5 L475.5 1358.5 M475.5 1460.5 L475.5 1472.5 M462.8 1377.5 L488.2 1377.5 M475.5 1364.7 L475.5 1390.2 M462.8 1440.5 L488.2 1440.5 M2266.5 1370 L2266.5 1472.5 M2305.5 1370 L2305.5 1472.5 M2305.5 1378 L2266.5 1402 L2305.5 1427.5 M2266.5 1416 L2305.5 1440 L2266.5 1466 M2132.5 1421.5 L2266.5 1421.5 M2305.5 1421.5 L2591.5 1421.5 M2266.5 1474 L2266.5 1497 M2591 1351.5 L2694 1351.5 M2591 1389.5 L2694 1389.5 M2599 1351.5 L2623 1389.5 L2648.5 1351.5 M2637 1389.5 L2662 1351.5 L2687 1389.5 M2623 1389.5 L2591.5 1421.5 M1415.5 1778.5 L1471.5 1778.5 L1443.5 1807.5 Z"/>
</g>
<circle cx="475.00" cy="1408.96" r="50.60" fill="none" stroke="#16168c" stroke-width="1.1"/>
<g fill="#c4c4ff">
<rect x="901.0" y="1007.0" width="15" height="15"/>
<rect x="1538.0" y="1007.0" width="15" height="15"/>
<rect x="1538.0" y="1210.0" width="15" height="15"/>
<rect x="1538.0" y="1414.0" width="15" height="15"/>
<rect x="1871.0" y="1414.0" width="15" height="15"/>
<rect x="901.0" y="1695.0" width="15" height="15"/>
<rect x="1436.0" y="1695.0" width="15" height="15"/>
<rect x="1538.0" y="1695.0" width="15" height="15"/>
<rect x="1871.0" y="1695.0" width="15" height="15"/>
</g>
<g fill="#0000ff" stroke="#10107a" stroke-width="0.8">
<rect x="902.4" y="1008.4" width="12" height="12"/>
<rect x="1539.4" y="1008.4" width="12" height="12"/>
<rect x="1539.4" y="1211.4" width="12" height="12"/>
<rect x="1539.4" y="1415.4" width="12" height="12"/>
<rect x="1872.4" y="1415.4" width="12" height="12"/>
<rect x="902.4" y="1696.4" width="12" height="12"/>
<rect x="1437.4" y="1696.4" width="12" height="12"/>
<rect x="1539.4" y="1696.4" width="12" height="12"/>
<rect x="1872.4" y="1696.4" width="12" height="12"/>
</g>
<g font-size="36" font-weight="bold" fill="#000" stroke="#000" stroke-width="0.6">
<text x="506.9" y="1142.3" textLength="49.1" lengthAdjust="spacingAndGlyphs">R6</text>
<text x="939.0" y="1244.2" textLength="49.1" lengthAdjust="spacingAndGlyphs">R1</text>
<text x="919.7" y="1422.2" textLength="47.2" lengthAdjust="spacingAndGlyphs">C1</text>
<text x="512.0" y="1358.7" textLength="47.7" lengthAdjust="spacingAndGlyphs">V1</text>
<text x="511.7" y="1486.4" textLength="282.7" lengthAdjust="spacingAndGlyphs">SINE(0 311 50)</text>
<text x="1577.3" y="1117.5" textLength="50.2" lengthAdjust="spacingAndGlyphs">R2</text>
<text x="1450.0" y="1295.4" textLength="48.8" lengthAdjust="spacingAndGlyphs">R7</text>
<text x="1577.3" y="1295.4" textLength="50.2" lengthAdjust="spacingAndGlyphs">R3</text>
<text x="1519.0" y="1352.7" textLength="26.2" lengthAdjust="spacingAndGlyphs">K</text>
<text x="1713.2" y="1388.4" textLength="49.0" lengthAdjust="spacingAndGlyphs">R4</text>
<text x="1556.9" y="1524.4" textLength="49.0" lengthAdjust="spacingAndGlyphs">C2</text>
<text x="1889.7" y="1524.4" textLength="48.3" lengthAdjust="spacingAndGlyphs">C3</text>
<text x="2044.6" y="1387.9" textLength="47.9" lengthAdjust="spacingAndGlyphs">R5</text>
<text x="2260.7" y="1362.0" textLength="48.7" lengthAdjust="spacingAndGlyphs">U1</text>
<text x="2667.5" y="1333.3" textLength="51.0" lengthAdjust="spacingAndGlyphs">U2</text>
<text x="410.4" y="1741.3" textLength="276.5" lengthAdjust="spacingAndGlyphs">.tran .2 startup</text>
</g>
<path d="M1517.3 1334 Q1516.5 1336 1518 1345.5" fill="none" stroke="#000" stroke-width="2.6" stroke-linecap="round"/>
<path d="M1500 1324 L1516 1333" fill="none" stroke="#555" stroke-width="0.6" stroke-dasharray="1.5 1"/>
</svg></body></html>
